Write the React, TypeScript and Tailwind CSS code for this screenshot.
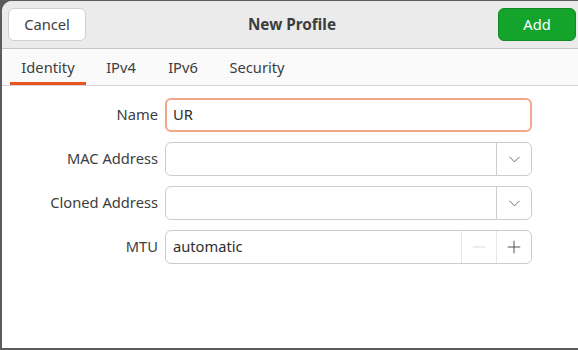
import { ChevronDown, Minus, Plus } from 'lucide-react';

const tabs = [
  { name: 'Identity', w: 'w-[76px]' },
  { name: 'IPv4', w: 'w-[70px]' },
  { name: 'IPv6', w: 'w-[54px]' },
  { name: 'Security', w: 'w-[94px]' },
];

function Row({ label, children }: { label: string; children: React.ReactNode }) {
  return (
    <div className="flex items-center h-[34px]">
      <label className="w-[156px] pb-[2px] text-right text-[#3d3d3d]">{label}</label>
      <div className="ml-[7px] flex-1">{children}</div>
    </div>
  );
}

function ComboBox() {
  return (
    <div className="flex h-[34px] rounded-[6px] border border-[#cdcdcd] bg-white">
      <div className="flex-1" />
      <div className="w-[35px] flex items-center justify-center border-l border-[#cdcdcd]">
        <ChevronDown className="w-[19px] h-[19px] text-[#555]" strokeWidth={1.1} />
      </div>
    </div>
  );
}

export default function App() {
  return (
    <div
      className="w-[578px] h-[350px] bg-[#5c5c5c] pl-[2px] pt-[1px] pb-[2px] overflow-hidden"
      style={{ fontFamily: '"Noto Sans", "Open Sans", sans-serif' }}
    >
      <div className="h-full rounded-tl-[10px] bg-white overflow-hidden flex flex-col text-[14.7px]">
        {/* Header bar */}
        <div className="h-[48px] shrink-0 bg-[#ebebeb] border-b border-[#c4c4c4] flex items-center justify-between pl-[6px] pr-[2px]">
          <button className="w-[78px] h-[33px] rounded-[6px] bg-white border border-[#cfcfcf] text-[#3d3d3d]">
            Cancel
          </button>
          <h1 className="font-bold text-[15.3px] text-[#3d3d3d]">New Profile</h1>
          <button className="w-[78px] h-[33px] rounded-[6px] bg-[#14a42c] border border-[#118a25] text-white">
            Add
          </button>
        </div>

        {/* Tabs */}
        <div className="h-[37px] shrink-0 bg-[#fafafa] border-b border-[#d6d6d6] flex items-stretch pl-[8px]">
          {tabs.map((t, i) => (
            <div
              key={t.name}
              className={`${t.w} flex items-center justify-center text-[#3d3d3d] ${
                i === 0 ? 'border-b-[3px] border-[#e95420] pt-[3px]' : ''
              }`}
            >
              {t.name}
            </div>
          ))}
        </div>

        {/* Form */}
        <div className="flex-1 pt-[12px] pr-[46px] flex flex-col gap-[10px]">
          <Row label="Name">
            <div className="h-[34px] rounded-[6px] border-2 border-[#f2a68b] flex items-center px-[6px] pb-[2px] text-[#2e2e2e]">
              UR
            </div>
          </Row>
          <Row label="MAC Address">
            <ComboBox />
          </Row>
          <Row label="Cloned Address">
            <ComboBox />
          </Row>
          <Row label="MTU">
            <div className="flex h-[34px] rounded-[6px] border border-[#cdcdcd] bg-white">
              <div className="flex-1 flex items-center px-[7px] pb-[2px] text-[#2e2e2e]">automatic</div>
              <div className="w-[35px] flex items-center justify-center border-l border-[#e6e6e6]">
                <Minus className="w-[20px] h-[20px] text-[#d4d4d4]" strokeWidth={1} />
              </div>
              <div className="w-[35px] flex items-center justify-center border-l border-[#e6e6e6]">
                <Plus className="w-[20px] h-[20px] text-[#444]" strokeWidth={1.1} />
              </div>
            </div>
          </Row>
        </div>
      </div>
    </div>
  );
}
